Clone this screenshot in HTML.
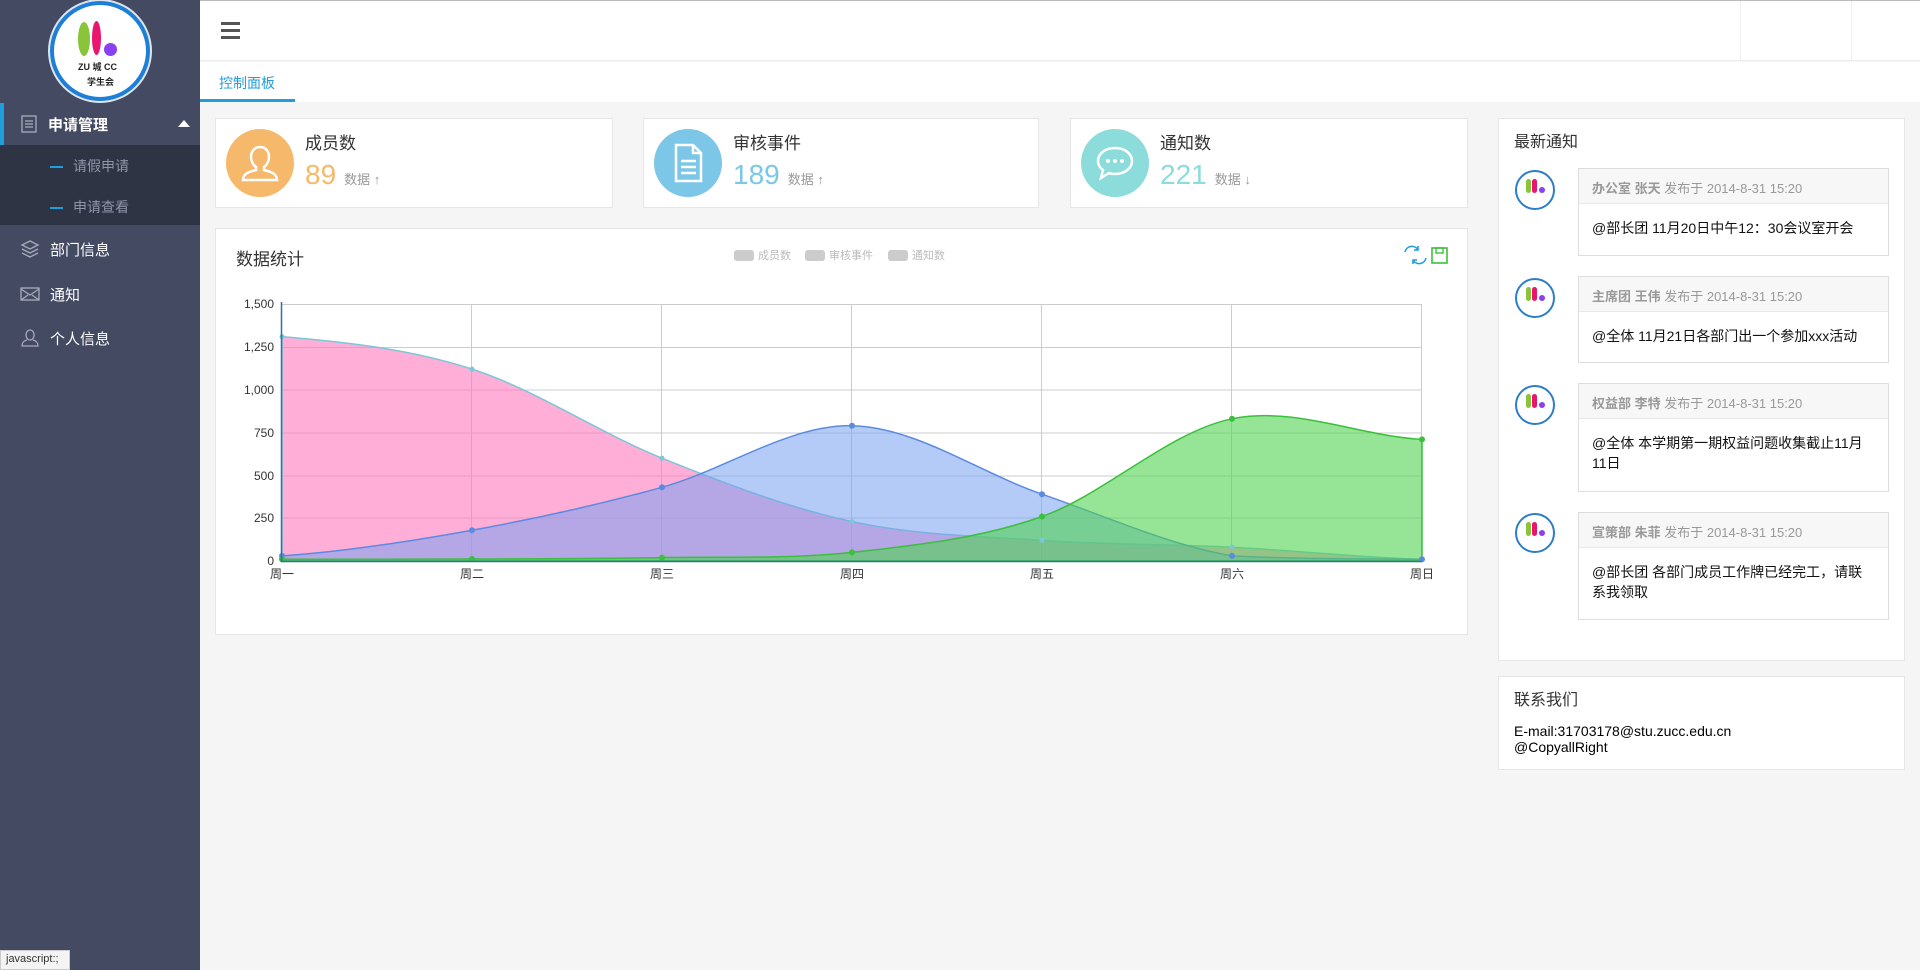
<!DOCTYPE html>
<html><head><meta charset="utf-8"><style>
*{margin:0;padding:0;box-sizing:border-box}
body{width:1920px;height:970px;overflow:hidden;background:#f5f5f5;font-family:"Liberation Sans","Noto Sans CJK SC",sans-serif;position:relative;color:#333}
.abs{position:absolute}
#side{left:0;top:0;width:200px;height:970px;background:#434a62}
.mi{position:absolute;left:0;width:200px;color:#fff;font-size:15px;display:flex;align-items:center}
.mi svg{margin-left:20px;margin-right:10px}
.sub{color:#8e95a8;font-size:14px;position:absolute;left:50px}
.sub:before{content:"";display:inline-block;width:13px;height:2px;background:#1e9fdb;margin-right:10px;vertical-align:middle}
.card{position:absolute;background:#fff;border:1px solid #e6e6e6}
.ic{position:absolute;left:10px;top:10px;width:68px;height:68px;border-radius:50%}
.ct{position:absolute;left:89px;top:10px;font-size:17px;color:#333}
.cn{position:absolute;left:89px;top:40px;font-size:28px}
.cs{font-size:13px;color:#999;margin-left:8px}
.nbox{position:absolute;left:1578px;width:311px;background:#fff;border:1px solid #ddd}
.nh{height:35px;background:#f7f7f7;border-bottom:1px solid #e8e8e8;color:#999;font-size:13px;padding:9px 13px}
.nh b{font-weight:bold;color:#999}
.nb{padding:14px 13px;font-size:14px;color:#111;line-height:20px}
.av{position:absolute;left:1515px;width:40px;height:40px;border-radius:50%;border:2px solid #2d7dc9;background:#fff}
.av:before{content:"";position:absolute;left:9px;top:7px;width:5px;height:14px;border-radius:3px;background:#8ac43a;box-shadow:6px 0 0 #e8166f}
.av:after{content:"";position:absolute;left:22px;top:15px;width:6px;height:6px;border-radius:50%;background:#8a3ff0}
</style></head><body>
<div class="abs" style="left:0;top:0;width:1920px;height:1px;background:#bbb"></div>
<div id="side" class="abs">
 <div class="abs" style="left:50px;top:1px;width:100px;height:100px;border-radius:50%;background:#fff;border:4px solid #1e7fd6;box-shadow:0 0 0 2px #dfe6ee">
  <i class="abs" style="left:24px;top:17px;width:12px;height:34px;border-radius:50%;background:#8ac43a"></i>
  <i class="abs" style="left:38px;top:16px;width:9px;height:34px;border-radius:50%;background:#e8166f"></i>
  <i class="abs" style="left:50px;top:38px;width:13px;height:13px;border-radius:50%;background:#8a3ff0"></i>
  <span class="abs" style="left:24px;top:55px;font-size:9px;font-weight:bold;color:#222">ZU 城 CC</span>
  <span class="abs" style="left:33px;top:70px;font-size:9px;font-weight:bold;color:#222">学生会</span>
 </div>
 <div class="mi" style="top:103px;height:42px;background:#434a62;border-left:4px solid #1e9fdb">
  <svg width="18" height="18" viewBox="0 0 18 18" style="margin-left:16px"><rect x="2" y="1" width="14" height="16" fill="none" stroke="#aab" stroke-width="1.3"/><path d="M5 6h8M5 9h8M5 12h8" stroke="#aab" stroke-width="1.2"/></svg>
  <b style="font-weight:bold">申请管理</b>
  <span style="position:absolute;right:10px;top:17px;border:6px solid transparent;border-bottom:7px solid #fff;border-top:0"></span>
 </div>
 <div class="abs" style="top:145px;left:0;width:200px;height:80px;background:#2f3445"></div>
 <div class="sub" style="top:156px">请假申请</div>
 <div class="sub" style="top:197px">申请查看</div>
 <div class="mi" style="top:236px;height:26px"><svg width="20" height="20" viewBox="0 0 20 20"><path d="M10 2l8 4-8 4-8-4z M2 10l8 4 8-4 M2 14l8 4 8-4" fill="none" stroke="#aab" stroke-width="1.3"/></svg>部门信息</div>
 <div class="mi" style="top:281px;height:26px"><svg width="20" height="16" viewBox="0 0 20 16"><rect x="1" y="2" width="18" height="12" fill="none" stroke="#aab" stroke-width="1.3"/><path d="M1 3l9 6 9-6M1 14l7-5M19 14l-7-5" fill="none" stroke="#aab" stroke-width="1.2"/></svg>通知</div>
 <div class="mi" style="top:325px;height:26px"><svg width="20" height="20" viewBox="0 0 20 20"><path d="M10 2a4 5 0 1 0 .1 0zM7 12c-4 1-5 3-5 6h16c0-3-1-5-5-6" fill="none" stroke="#aab" stroke-width="1.3"/></svg>个人信息</div>
</div>
<div class="abs" style="left:0;top:950px;width:70px;height:20px;background:#f4f4f4;border:1px solid #ccc;font-size:11px;padding:2px 5px;color:#333">javascript:;</div>
<div class="abs" style="left:200px;top:1px;width:1720px;height:60px;background:#fff;border-bottom:1px solid #eee"></div>
<div class="abs" style="left:221px;top:22px;width:19px;height:18px;"><div style="height:3px;background:#555;margin-bottom:4px"></div><div style="height:3px;background:#555;margin-bottom:4px"></div><div style="height:3px;background:#555"></div></div>
<div class="abs" style="left:1740px;top:1px;width:1px;height:60px;background:#eee"></div>
<div class="abs" style="left:1851px;top:1px;width:1px;height:60px;background:#eee"></div>
<div class="abs" style="left:200px;top:62px;width:1720px;height:40px;background:#fff"></div>
<div class="abs" style="left:219px;top:73px;font-size:14px;color:#1e9fdb">控制面板</div>
<div class="abs" style="left:200px;top:99px;width:95px;height:3px;background:#1e9fdb"></div>
<div class="card" style="left:215px;top:118px;width:398px;height:90px">
 <div class="ic" style="background:#f6b96b"><svg width="68" height="68" viewBox="0 0 68 68"><path d="M34 18c-6 0-9 5-9 10 0 4 2 8 5 10v3c-8 2-13 4-13 10h34c0-6-5-8-13-10v-3c3-2 5-6 5-10 0-5-3-10-9-10z" fill="none" stroke="#fff" stroke-width="2.5"/></svg></div>
 <div class="ct">成员数</div><div class="cn" style="color:#f6b96b">89<span class="cs">数据 ↑</span></div></div>
<div class="card" style="left:643px;top:118px;width:396px;height:90px">
 <div class="ic" style="background:#7cc6e8"><svg width="68" height="68" viewBox="0 0 68 68"><path d="M22 16h17l8 8v28H22z M39 16v8h8 M27 32h15M27 38h15M27 44h15" fill="none" stroke="#fff" stroke-width="2.5"/></svg></div>
 <div class="ct">审核事件</div><div class="cn" style="color:#7cc6e8">189<span class="cs">数据 ↑</span></div></div>
<div class="card" style="left:1070px;top:118px;width:398px;height:90px">
 <div class="ic" style="background:#8cdcdc"><svg width="68" height="68" viewBox="0 0 68 68"><path d="M34 19c-10 0-17 6-17 13 0 4 2 7 5 9l-2 8 8-5c2 1 4 1 6 1 10 0 17-6 17-13s-7-13-17-13z" fill="none" stroke="#fff" stroke-width="2.5"/><circle cx="27" cy="32" r="2" fill="#fff"/><circle cx="34" cy="32" r="2" fill="#fff"/><circle cx="41" cy="32" r="2" fill="#fff"/></svg></div>
 <div class="ct">通知数</div><div class="cn" style="color:#8cdcdc">221<span class="cs">数据 ↓</span></div></div>
<div class="card" style="left:215px;top:228px;width:1253px;height:407px"></div>
<div class="abs" style="left:236px;top:245px;font-size:17px;color:#333">数据统计</div>
<svg class="abs" style="left:0;top:0" width="1920" height="970">
 <g font-size="11" fill="#bbb" font-family="Liberation Sans,Noto Sans CJK SC,sans-serif">
  <rect x="734" y="250" width="20" height="11" rx="3" fill="#ccc"/><text x="758" y="259">成员数</text>
  <rect x="805" y="250" width="20" height="11" rx="3" fill="#ccc"/><text x="829" y="259">审核事件</text>
  <rect x="888" y="250" width="20" height="11" rx="3" fill="#ccc"/><text x="912" y="259">通知数</text>
 </g>
 <path d="M1405 252a7 7 0 0 1 13-2M1426 258a7 7 0 0 1-13 2M1418 246v4h-4M1413 264v-4h4" fill="none" stroke="#1e9fdb" stroke-width="1.6"/>
 <rect x="1432" y="248" width="15" height="15" fill="none" stroke="#3cbf3c" stroke-width="1.6"/><rect x="1436" y="248" width="7" height="5" fill="none" stroke="#3cbf3c" stroke-width="1.4"/>
 <g stroke="#ccc" stroke-width="1">
  <path d="M282 304.5H1422M282 347.5H1422M282 390H1422M282 433H1422M282 476H1422M282 518H1422"/>
  <path d="M471.5 304V561M661.5 304V561M851.5 304V561M1041.5 304V561M1231.5 304V561M1421.5 304V561"/>
 </g>
 <path d="M282 336.6C345 342 409 348.8 472 369.1C535 389.4 599 432.8 662 458.2C725 483.6 789 507.9 852 521.6C915 535.3 979 536.1 1042 540.4C1105 544.7 1169 544.1 1232 547.3C1295 550.5 1359 557.3 1422 559.3L1422 561L282 561Z" fill="rgba(255,120,190,0.6)" stroke="#7cc6d8" stroke-width="1.5"/>
 <path d="M282 555.9C345 551.6 409 541.6 472 530.2C535 518.8 599 504.7 662 487.3C725 469.9 789 424.6 852 425.7C915 426.8 979 472.5 1042 494.2C1105 515.9 1169 545.1 1232 555.9C1295 559 1359 558.7 1422 559.3L1422 561L282 561Z" fill="rgba(120,160,240,0.55)" stroke="#5b8be0" stroke-width="1.5"/>
 <path d="M282 559.3C345 559.2 409 559.3 472 559C535 558.7 599 558.7 662 557.6C725 556.5 789 559.2 852 552.4C915 545.5 979 538.8 1042 516.5C1105 494.2 1169 431.6 1232 418.8C1295 406 1359 436 1422 439.4L1422 561L282 561Z" fill="rgba(80,210,80,0.6)" stroke="#3cbf3c" stroke-width="1.5"/>
 <g fill="#7cc6d8"><circle cx="282" cy="336.6" r="2.5"/><circle cx="472" cy="369.1" r="2.5"/><circle cx="662" cy="458.2" r="2.5"/><circle cx="852" cy="521.6" r="2.5"/><circle cx="1042" cy="540.4" r="2.5"/><circle cx="1232" cy="547.3" r="2.5"/></g>
 <g fill="#5b8be0"><circle cx="282" cy="555.9" r="3"/><circle cx="472" cy="530.2" r="3"/><circle cx="662" cy="487.3" r="3"/><circle cx="852" cy="425.7" r="3"/><circle cx="1042" cy="494.2" r="3"/><circle cx="1232" cy="555.9" r="3"/><circle cx="1422" cy="559.3" r="3"/></g>
 <g fill="#3cbf3c"><circle cx="282" cy="559.3" r="3"/><circle cx="472" cy="559" r="3"/><circle cx="662" cy="557.6" r="3"/><circle cx="852" cy="552.4" r="3"/><circle cx="1042" cy="516.5" r="3"/><circle cx="1232" cy="418.8" r="3"/><circle cx="1422" cy="439.4" r="3"/></g>
 <path d="M281.5 302V561.5H1422" fill="none" stroke="#2a6fb5" stroke-width="1.5"/>
 <g font-size="12" fill="#333" font-family="Liberation Sans,Noto Sans CJK SC,sans-serif" text-anchor="end">
  <text x="274" y="308">1,500</text><text x="274" y="351">1,250</text><text x="274" y="394">1,000</text><text x="274" y="437">750</text><text x="274" y="480">500</text><text x="274" y="522">250</text><text x="274" y="565">0</text>
 </g>
 <g font-size="12" fill="#333" font-family="Liberation Sans,Noto Sans CJK SC,sans-serif" text-anchor="middle">
  <text x="282" y="578">周一</text><text x="472" y="578">周二</text><text x="662" y="578">周三</text><text x="852" y="578">周四</text><text x="1042" y="578">周五</text><text x="1232" y="578">周六</text><text x="1422" y="578">周日</text>
 </g>
</svg>
<div class="card" style="left:1498px;top:118px;width:407px;height:543px"></div>
<div class="abs" style="left:1514px;top:128px;font-size:16px;color:#333">最新通知</div>
<div class="av" style="top:170px"></div><div class="av" style="top:278px"></div><div class="av" style="top:385px"></div><div class="av" style="top:513px"></div>
<div class="nbox" style="top:168px;height:88px"><div class="nh"><b>办公室 张天</b> 发布于 2014-8-31 15:20</div><div class="nb">@部长团 11月20日中午12：30会议室开会</div></div>
<div class="nbox" style="top:276px;height:87px"><div class="nh"><b>主席团 王伟</b> 发布于 2014-8-31 15:20</div><div class="nb">@全体 11月21日各部门出一个参加xxx活动</div></div>
<div class="nbox" style="top:383px;height:109px"><div class="nh"><b>权益部 李特</b> 发布于 2014-8-31 15:20</div><div class="nb">@全体 本学期第一期权益问题收集截止11月11日</div></div>
<div class="nbox" style="top:512px;height:108px"><div class="nh"><b>宣策部 朱菲</b> 发布于 2014-8-31 15:20</div><div class="nb">@部长团 各部门成员工作牌已经完工，请联系我领取</div></div>
<div class="card" style="left:1498px;top:676px;width:407px;height:94px"></div>
<div class="abs" style="left:1514px;top:686px;font-size:16px;color:#333">联系我们</div>
<div class="abs" style="left:1514px;top:723px;font-size:14px;color:#000;line-height:16px">E-mail:31703178@stu.zucc.edu.cn<br>@CopyallRight</div>
</body></html>
